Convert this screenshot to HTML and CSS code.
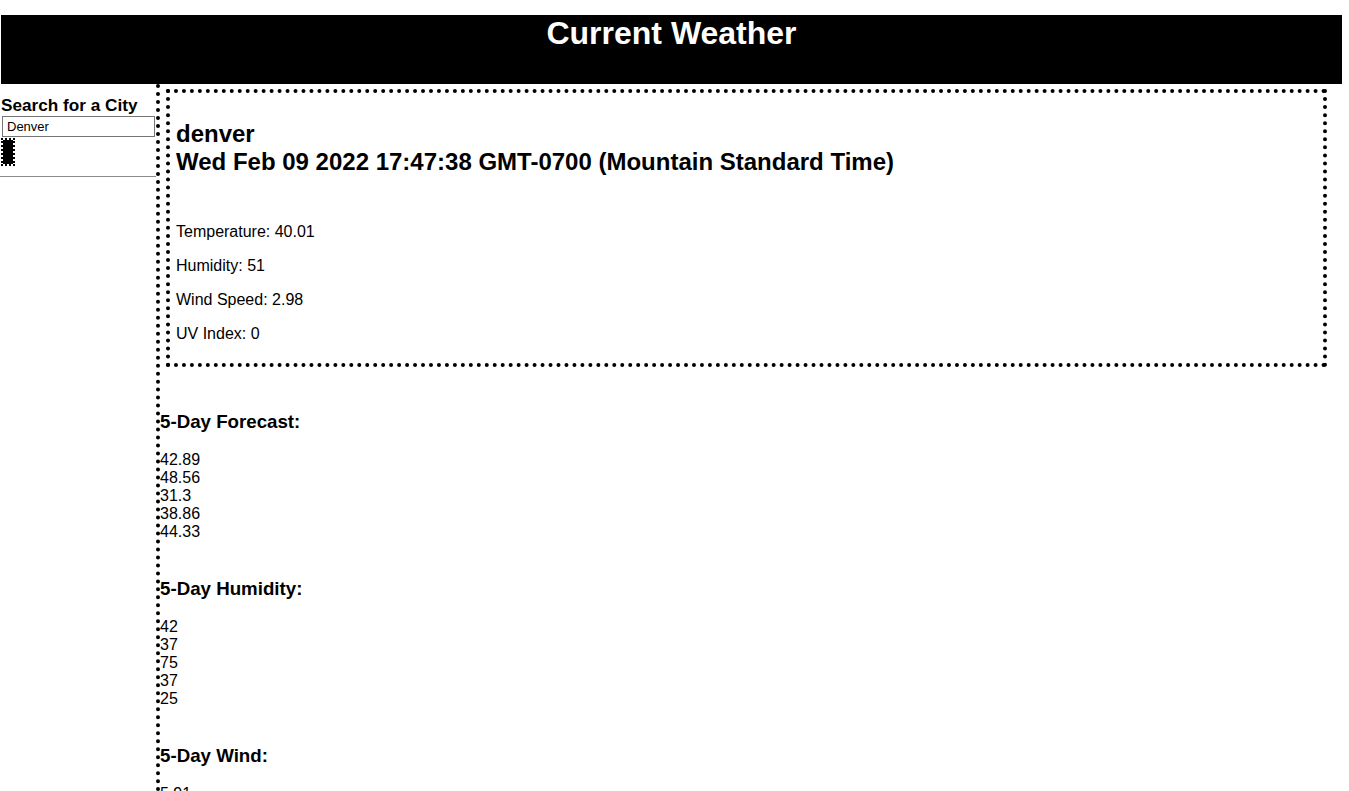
FILE: index.html
```html
<!DOCTYPE html>
<html lang="en">
<head>
<meta charset="utf-8">
<title>Current Weather</title>
<link rel="stylesheet" href="styles.css">
</head>
<body>
<header class="top">
  <h1 class="title">Current Weather</h1>
</header>
<div class="layout">
  <aside class="sidebar">
    <label class="search-label" for="city">Search for a City</label>
    <input class="search-input" id="city" type="text" value="Denver">
    <button class="search-btn" type="button" aria-label="Search"></button>
    <hr class="divider">
  </aside>
  <main class="main">
    <section class="card">
      <h2 class="city">denver<br>Wed Feb 09 2022 17:47:38 GMT-0700 (Mountain Standard Time)</h2>
      <p class="stat">Temperature: 40.01</p>
      <p class="stat">Humidity: 51</p>
      <p class="stat">Wind Speed: 2.98</p>
      <p class="stat">UV Index: 0</p>
    </section>
    <section class="forecast forecast-first">
      <h3 class="forecast-title">5-Day Forecast:</h3>
      <div class="values">
        <div>42.89</div><div>48.56</div><div>31.3</div><div>38.86</div><div>44.33</div>
      </div>
    </section>
    <section class="forecast">
      <h3 class="forecast-title">5-Day Humidity:</h3>
      <div class="values">
        <div>42</div><div>37</div><div>75</div><div>37</div><div>25</div>
      </div>
    </section>
    <section class="forecast">
      <h3 class="forecast-title">5-Day Wind:</h3>
      <div class="values">
        <div>5.91</div><div>6.4</div><div>4.12</div><div>5.37</div><div>3.8</div>
      </div>
    </section>
  </main>
</div>
</body>
</html>
```

FILE: styles.css
```css
html, body {
  margin: 0;
  padding: 0;
  background: #fff;
  color: #000;
  font-family: "Liberation Sans", Arial, Helvetica, sans-serif;
}

.top {
  margin: 15px 7px 0 1px;
  height: 69px;
  background: #000;
}

.title {
  margin: 0;
  color: #fff;
  font-size: 32px;
  font-weight: bold;
  text-align: center;
}

.layout {
  display: flex;
  align-items: stretch;
}

.sidebar {
  width: 156px;
  flex: 0 0 156px;
  box-sizing: border-box;
  padding: 11px 0 0 1px;
}

.search-label {
  display: block;
  font-size: 17.2px;
  font-weight: bold;
  line-height: 20px;
  margin-bottom: 1px;
}

.search-input {
  display: block;
  box-sizing: border-box;
  width: 153px;
  height: 21px;
  margin: 0 0 0 1px;
  padding: 1px 4px;
  border: 1px solid #767676;
  font-family: "Liberation Sans", Arial, sans-serif;
  font-size: 13px;
  color: #000;
  background: #fff;
}

.search-btn {
  display: block;
  width: 14px;
  height: 28px;
  margin: 1px 0 0 0;
  padding: 0;
  border: 2px dotted #000;
  background: #000;
  background-clip: padding-box;
}

.divider {
  margin: 10px 0 0 -1px;
  border: 0;
  border-top: 1px solid #8c8c8c;
  height: 0;
}

.main {
  flex: 1 1 auto;
  min-height: 900px;
  border-left: 4px dotted #000;
}

.card {
  margin: 5px 22px 0 6px;
  padding: 7px 7px 4px 6px;
  border: 4px dotted #000;
}

.city {
  margin: 20px 0 47px;
  font-size: 24px;
  font-weight: bold;
}

.stat {
  margin: 16px 0;
  font-size: 16px;
}

.forecast-title {
  margin: 0 0 18px;
  font-size: 18.72px;
  font-weight: bold;
}

.forecast {
  margin-top: 37px;
}

.forecast-first {
  margin-top: 44px;
}

.values {
  font-size: 16px;
  line-height: 18px;
}
```
